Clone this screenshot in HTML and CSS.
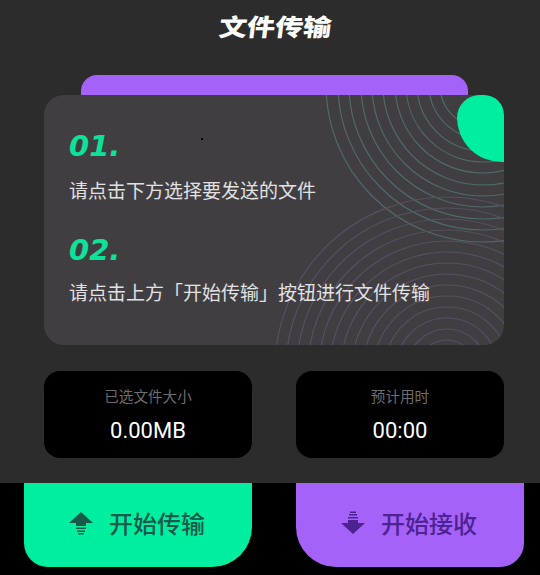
FILE: index.html
```html
<!DOCTYPE html>
<html lang="zh">
<head>
    <meta charset="UTF-8">
    <meta name="viewport" content="width=device-width, initial-scale=1.0">
    <title>文件传输</title>
    <link rel="stylesheet" href="styles.css">
</head>
<body>
    <div class="top-panel">
        <h1 class="title">文件传输</h1>
        <div class="tab-bar"></div>
        <div class="guide-card">
            <svg class="rings" width="460" height="250" viewBox="0 0 460 250">
                <g class="rings-green">
                    <circle cx="439" cy="-10" r="157"/><circle cx="439" cy="-10" r="145"/>
                    <circle cx="439" cy="-10" r="134"/><circle cx="439" cy="-10" r="122"/>
                    <circle cx="439" cy="-10" r="111"/><circle cx="439" cy="-10" r="100"/>
                    <circle cx="439" cy="-10" r="88"/><circle cx="439" cy="-10" r="77"/>
                    <circle cx="439" cy="-10" r="66"/><circle cx="439" cy="-10" r="54"/>
                    <circle cx="439" cy="-10" r="43"/>
                </g>
                <g class="rings-purple">
                    <circle cx="403" cy="274" r="172"/><circle cx="403" cy="274" r="161"/>
                    <circle cx="403" cy="274" r="150"/><circle cx="403" cy="274" r="139"/>
                    <circle cx="403" cy="274" r="128"/><circle cx="403" cy="274" r="117"/>
                    <circle cx="403" cy="274" r="106"/><circle cx="403" cy="274" r="95"/>
                    <circle cx="403" cy="274" r="84"/><circle cx="403" cy="274" r="73"/>
                    <circle cx="403" cy="274" r="62"/><circle cx="403" cy="274" r="51"/>
                    <circle cx="403" cy="274" r="40"/><circle cx="403" cy="274" r="29"/>
                </g>
            </svg>
            <div class="corner"></div>
            <span class="speck"></span>
            <div class="step-num">01.</div>
            <p class="step-text">请点击下方选择要发送的文件</p>
            <div class="step-num step-num-two">02.</div>
            <p class="step-text">请点击上方「开始传输」按钮进行文件传输</p>
        </div>
        <div class="stats">
            <div class="stat">
                <div class="stat-label">已选文件大小</div>
                <div class="stat-value">0.00MB</div>
            </div>
            <div class="stat">
                <div class="stat-label">预计用时</div>
                <div class="stat-value">00:00</div>
            </div>
        </div>
    </div>
    <div class="actions">
        <button type="button" class="action action-send">
            <svg width="24" height="24" viewBox="0 0 24 24"><path d="M12 1 L24 12 H17 V15 H7 V12 H0 Z M7 16.5 H17 V18 H7 Z M8 19.5 H16 V21 H8 Z M9 22 H15 V23.5 H9 Z"/></svg>
            开始传输
        </button>
        <button type="button" class="action action-recv">
            <svg width="24" height="24" viewBox="0 0 24 24"><path d="M12 23 L24 12 H17 V9 H7 V12 H0 Z M7 6 H17 V7.5 H7 Z M8 3 H16 V4.5 H8 Z M9 0.5 H15 V2 H9 Z"/></svg>
            开始接收
        </button>
    </div>
</body>
</html>
```

FILE: styles.css
```css
html, body {
    margin: 0;
    height: 100%;
}
body {
    width: 540px;
    height: 575px;
    overflow: hidden;
    background-color: #000000;
    font-family: "Noto Sans CJK SC", "Noto Sans", sans-serif;
}
.top-panel {
    height: 483px;
    background-color: #2c2c2c;
    padding: 0 36px 0 44px;
    box-sizing: border-box;
}
.title {
    margin: 0;
    height: 75px;
    padding-top: 8px;
    box-sizing: border-box;
    text-align: center;
    color: #ffffff;
    font-size: 24px;
    line-height: 36px;
    font-weight: 900;
    transform: scaleX(1.17) skewX(-6deg);
}
.tab-bar {
    height: 20px;
    margin: 0 36px 0 37px;
    background-color: #a462f8;
    border-radius: 16px 16px 0 0;
}
.guide-card {
    position: relative;
    height: 250px;
    padding: 35px 25px 0;
    box-sizing: border-box;
    background-color: #413e42;
    border-radius: 20px;
    overflow: hidden;
}
.rings {
    position: absolute;
    top: 0;
    left: 0;
    fill: none;
    stroke-width: 1.2;
}
.rings-green {
    stroke: #4f6a69;
}
.rings-purple {
    stroke: #565062;
}
.corner {
    position: absolute;
    top: 0;
    right: 0;
    width: 47px;
    height: 67px;
    background-color: #00ee9f;
    border-radius: 24px 20px 0 47px / 24px 20px 0 47px;
}
.speck {
    position: absolute;
    top: 43px;
    left: 157px;
    width: 2px;
    height: 2px;
    background-color: #000000;
}
.step-num {
    position: relative;
    height: 32px;
    color: #0ce29a;
    font-family: "DejaVu Sans", sans-serif;
    font-size: 29px;
    line-height: 32px;
    font-weight: bold;
    font-style: italic;
}
.step-num-two {
    margin-top: 30px;
}
.step-text {
    position: relative;
    margin: 14px 0 0;
    color: #e2e2e2;
    font-size: 19px;
    line-height: 28px;
    white-space: nowrap;
}
.step-num-two + .step-text {
    margin-top: 12px;
}
.stats {
    display: flex;
    gap: 44px;
    margin-top: 26px;
}
.stat {
    width: 208px;
    height: 87px;
    padding-top: 14px;
    box-sizing: border-box;
    background-color: #000000;
    border-radius: 16px;
    text-align: center;
}
.stat-label {
    color: #6e6e6e;
    font-size: 14.6px;
    line-height: 22px;
}
.stat-value {
    margin-top: 9px;
    color: #ffffff;
    font-family: Roboto, sans-serif;
    font-size: 22px;
    line-height: 30px;
}
.actions {
    display: flex;
    gap: 44px;
    padding: 0 16px 0 24px;
}
.action {
    display: flex;
    align-items: center;
    justify-content: center;
    gap: 16px;
    width: 228px;
    height: 84px;
    padding: 0 2px 5px 0;
    box-sizing: border-box;
    border: none;
    font-family: inherit;
    font-size: 24px;
    font-weight: 500;
}
.action-send {
    background-color: #00ee9f;
    color: #17594a;
    fill: #17594a;
    border-radius: 0 0 40px 24px;
}
.action-recv {
    background-color: #a462f8;
    color: #4c2390;
    fill: #4c2390;
    border-radius: 0 0 24px 40px;
}
```
